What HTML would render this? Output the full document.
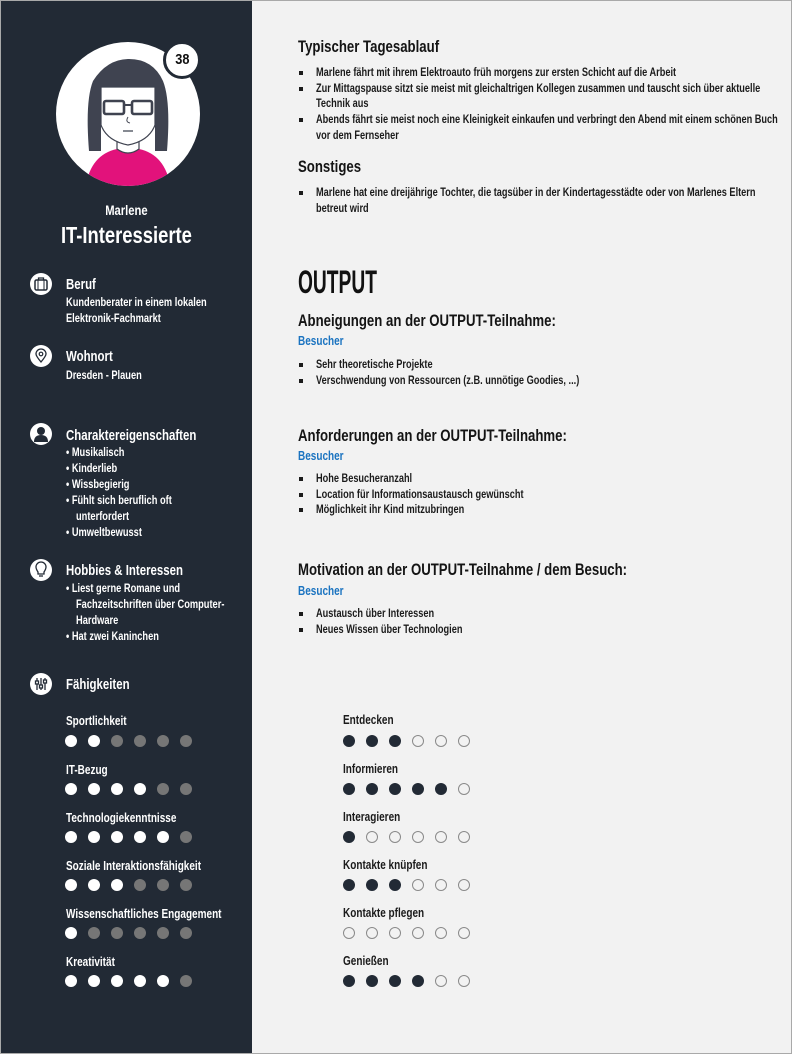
<!DOCTYPE html>
<html><head><meta charset="utf-8"><style>
*{margin:0;padding:0;box-sizing:border-box}
html,body{width:792px;height:1054px;overflow:hidden;background:#f2f2f2}
body{position:relative;font-family:"Liberation Sans Narrow","Liberation Sans",sans-serif;font-weight:bold;color:#1b1b1b}
#frame{position:absolute;left:0;top:0;width:792px;height:1054px;border:1px solid #a9a9a9}
#side{position:absolute;left:1px;top:1px;width:251px;height:1052px;background:#222a35;color:#fff}
.a{position:absolute;white-space:nowrap;transform:scaleX(.8);transform-origin:0 0}
.h{font-size:14.3px;line-height:16px}
.s{font-size:12.5px;line-height:16px}
.t{font-size:11.6px;line-height:16px}
.rh{font-size:16.5px;line-height:20px;color:#141414}
.b{font-size:11.5px;line-height:16px;color:#1b1b1b}
.blue{color:#1a73c0;font-size:12.5px;line-height:16px}
.sq{position:absolute;width:4px;height:4px;background:#1b1b1b}
.ic{position:absolute;width:22px;height:22px;border-radius:50%;background:#fff}
.d{position:absolute;width:12px;height:12px;border-radius:50%}
.w{background:#fff}.g{background:#767676}.k{background:#222a35}.o{border:1.3px solid #8a8a8a;background:transparent}
</style></head><body>
<div id="frame"></div>
<div id="side">
<svg style="position:absolute;left:54px;top:40px" width="146" height="146" viewBox="0 0 146 146">
<defs><clipPath id="c"><circle cx="73" cy="73" r="72"/></clipPath></defs>
<circle cx="73" cy="73" r="72" fill="#fff"/>
<g clip-path="url(#c)">
<path d="M30 150 Q34 114 62 108 L84 108 Q112 114 116 150Z" fill="#e2127b"/>
<path d="M62 96 L62 108 Q73 116 84 108 L84 96Z" fill="#fff" stroke="#3f4350" stroke-width="1.2"/>
<path d="M34 110 Q30 60 38 40 Q52 18 74 18 Q98 18 108 40 Q116 60 112 110 L100 110 L100 50 L46 50 L46 110Z" fill="#3f4350"/>
<path d="M46 46 L100 46 L100 84 Q94 100 73 104 Q52 100 46 84Z" fill="#fff" stroke="#3f4350" stroke-width="1.2"/>
<rect x="49" y="60" width="20" height="13" rx="2" fill="none" stroke="#3f4350" stroke-width="2.6"/>
<rect x="77" y="60" width="20" height="13" rx="2" fill="none" stroke="#3f4350" stroke-width="2.6"/>
<line x1="69" y1="64" x2="77" y2="64" stroke="#3f4350" stroke-width="2"/>
<path d="M73 76 Q70 81 75 82" fill="none" stroke="#3f4350" stroke-width="1"/>
<line x1="68" y1="90" x2="78" y2="90" stroke="#3f4350" stroke-width="1.2"/>
</g></svg>
<div style="position:absolute;left:162px;top:40px;width:38px;height:38px;border-radius:50%;background:#fff;border:3px solid #222a35;color:#111;font-size:15px;line-height:32px;text-align:center"><span style="display:inline-block;transform:scaleX(.85)">38</span></div>
<div class="a" style="left:0;width:251px;text-align:center;top:201px;font-size:14px;line-height:16px;transform-origin:125px 0">Marlene</div>
<div class="a" style="left:0;width:251px;text-align:center;top:221px;font-size:23px;line-height:26px;transform-origin:125px 0">IT-Interessierte</div>

<div class="ic" style="left:29px;top:272px"><svg width="22" height="22"><rect x="5" y="7" width="12" height="10" rx="1.5" fill="none" stroke="#222a35" stroke-width="1.5"/><path d="M8.5 7 V5 H13.5 V7" fill="none" stroke="#222a35" stroke-width="1.3"/><line x1="8" y1="7" x2="8" y2="17" stroke="#222a35"/><line x1="14" y1="7" x2="14" y2="17" stroke="#222a35"/></svg></div>
<div class="a h" style="left:65px;top:276px">Beruf</div>
<div class="a t" style="left:65px;top:294px">Kundenberater in einem lokalen</div>
<div class="a t" style="left:65px;top:310px">Elektronik-Fachmarkt</div>

<div class="ic" style="left:29px;top:344px"><svg width="22" height="22"><path d="M11 17 Q6 11 6 9 A5 5 0 0 1 16 9 Q16 11 11 17Z" fill="none" stroke="#222a35" stroke-width="1.3"/><circle cx="11" cy="9" r="1.8" fill="none" stroke="#222a35" stroke-width="1.2"/></svg></div>
<div class="a h" style="left:65px;top:348px">Wohnort</div>
<div class="a t" style="left:65px;top:367px">Dresden - Plauen</div>

<div class="ic" style="left:29px;top:422px"><svg width="22" height="22"><circle cx="11" cy="8" r="4" fill="#222a35"/><path d="M4 19 Q4 12 11 12 Q18 12 18 19Z" fill="#222a35"/></svg></div>
<div class="a h" style="left:65px;top:427px">Charaktereigenschaften</div>
<div class="a t" style="left:65px;top:444px">• Musikalisch</div>
<div class="a t" style="left:65px;top:460px">• Kinderlieb</div>
<div class="a t" style="left:65px;top:476px">• Wissbegierig</div>
<div class="a t" style="left:65px;top:492px">• Fühlt sich beruflich oft</div>
<div class="a t" style="left:75px;top:508px">unterfordert</div>
<div class="a t" style="left:65px;top:524px">• Umweltbewusst</div>

<div class="ic" style="left:29px;top:558px"><svg width="22" height="22"><path d="M8 13 Q6 10 6 8 A5 5 0 0 1 16 8 Q16 10 14 13 L14 15 L8 15Z" fill="none" stroke="#222a35" stroke-width="1.3"/><line x1="9" y1="17" x2="13" y2="17" stroke="#222a35" stroke-width="1.3"/></svg></div>
<div class="a h" style="left:65px;top:562px">Hobbies &amp; Interessen</div>
<div class="a t" style="left:65px;top:580px">• Liest gerne Romane und</div>
<div class="a t" style="left:75px;top:596px">Fachzeitschriften über Computer-</div>
<div class="a t" style="left:75px;top:612px">Hardware</div>
<div class="a t" style="left:65px;top:628px">• Hat zwei Kaninchen</div>

<div class="ic" style="left:29px;top:672px"><svg width="22" height="22"><g stroke="#222a35" stroke-width="1.3" fill="none"><line x1="7" y1="5" x2="7" y2="17"/><line x1="11" y1="5" x2="11" y2="17"/><line x1="15" y1="5" x2="15" y2="17"/><rect x="5.5" y="8" width="3" height="3" fill="#fff"/><rect x="9.5" y="12" width="3" height="3" fill="#fff"/><rect x="13.5" y="7" width="3" height="3" fill="#fff"/></g></svg></div>
<div class="a h" style="left:65px;top:676px">Fähigkeiten</div>

<div class="a s" style="left:65px;top:712px">Sportlichkeit</div>
<div class="a s" style="left:65px;top:761px">IT-Bezug</div>
<div class="a s" style="left:65px;top:809px">Technologiekenntnisse</div>
<div class="a s" style="left:65px;top:857px">Soziale Interaktionsfähigkeit</div>
<div class="a s" style="left:65px;top:905px">Wissenschaftliches Engagement</div>
<div class="a s" style="left:65px;top:953px">Kreativität</div>
</div>

<div class="d w" style="left:65px;top:735px"></div><div class="d w" style="left:88px;top:735px"></div><div class="d g" style="left:111px;top:735px"></div><div class="d g" style="left:134px;top:735px"></div><div class="d g" style="left:157px;top:735px"></div><div class="d g" style="left:180px;top:735px"></div>
<div class="d w" style="left:65px;top:783px"></div><div class="d w" style="left:88px;top:783px"></div><div class="d w" style="left:111px;top:783px"></div><div class="d w" style="left:134px;top:783px"></div><div class="d g" style="left:157px;top:783px"></div><div class="d g" style="left:180px;top:783px"></div>
<div class="d w" style="left:65px;top:831px"></div><div class="d w" style="left:88px;top:831px"></div><div class="d w" style="left:111px;top:831px"></div><div class="d w" style="left:134px;top:831px"></div><div class="d w" style="left:157px;top:831px"></div><div class="d g" style="left:180px;top:831px"></div>
<div class="d w" style="left:65px;top:879px"></div><div class="d w" style="left:88px;top:879px"></div><div class="d w" style="left:111px;top:879px"></div><div class="d g" style="left:134px;top:879px"></div><div class="d g" style="left:157px;top:879px"></div><div class="d g" style="left:180px;top:879px"></div>
<div class="d w" style="left:65px;top:927px"></div><div class="d g" style="left:88px;top:927px"></div><div class="d g" style="left:111px;top:927px"></div><div class="d g" style="left:134px;top:927px"></div><div class="d g" style="left:157px;top:927px"></div><div class="d g" style="left:180px;top:927px"></div>
<div class="d w" style="left:65px;top:975px"></div><div class="d w" style="left:88px;top:975px"></div><div class="d w" style="left:111px;top:975px"></div><div class="d w" style="left:134px;top:975px"></div><div class="d w" style="left:157px;top:975px"></div><div class="d g" style="left:180px;top:975px"></div>

<div class="a rh" style="left:298px;top:37px">Typischer Tagesablauf</div>
<div class="sq" style="left:299px;top:71px"></div><div class="a b" style="left:316px;top:65px">Marlene fährt mit ihrem Elektroauto früh morgens zur ersten Schicht auf die Arbeit</div>
<div class="sq" style="left:299px;top:87px"></div><div class="a b" style="left:316px;top:81px">Zur Mittagspause sitzt sie meist mit gleichaltrigen Kollegen zusammen und tauscht sich über aktuelle</div>
<div class="a b" style="left:316px;top:96px">Technik aus</div>
<div class="sq" style="left:299px;top:118px"></div><div class="a b" style="left:316px;top:112px">Abends fährt sie meist noch eine Kleinigkeit einkaufen und verbringt den Abend mit einem schönen Buch</div>
<div class="a b" style="left:316px;top:128px">vor dem Fernseher</div>

<div class="a rh" style="left:298px;top:157px">Sonstiges</div>
<div class="sq" style="left:299px;top:191px"></div><div class="a b" style="left:316px;top:185px">Marlene hat eine dreijährige Tochter, die tagsüber in der Kindertagesstädte oder von Marlenes Eltern</div>
<div class="a b" style="left:316px;top:201px">betreut wird</div>

<div class="a" style="left:298px;top:264px;font-size:32px;line-height:36px;color:#111;transform:scaleX(.6)">OUTPUT</div>

<div class="a rh" style="left:298px;top:311px">Abneigungen an der OUTPUT-Teilnahme:</div>
<div class="a blue" style="left:298px;top:333px">Besucher</div>
<div class="sq" style="left:299px;top:363px"></div><div class="a b" style="left:316px;top:357px">Sehr theoretische Projekte</div>
<div class="sq" style="left:299px;top:379px"></div><div class="a b" style="left:316px;top:373px">Verschwendung von Ressourcen (z.B. unnötige Goodies, ...)</div>

<div class="a rh" style="left:298px;top:426px">Anforderungen an der OUTPUT-Teilnahme:</div>
<div class="a blue" style="left:298px;top:448px">Besucher</div>
<div class="sq" style="left:299px;top:477px"></div><div class="a b" style="left:316px;top:471px">Hohe Besucheranzahl</div>
<div class="sq" style="left:299px;top:493px"></div><div class="a b" style="left:316px;top:487px">Location für Informationsaustausch gewünscht</div>
<div class="sq" style="left:299px;top:508px"></div><div class="a b" style="left:316px;top:502px">Möglichkeit ihr Kind mitzubringen</div>

<div class="a rh" style="left:298px;top:560px">Motivation an der OUTPUT-Teilnahme / dem Besuch:</div>
<div class="a blue" style="left:298px;top:583px">Besucher</div>
<div class="sq" style="left:299px;top:612px"></div><div class="a b" style="left:316px;top:606px">Austausch über Interessen</div>
<div class="sq" style="left:299px;top:628px"></div><div class="a b" style="left:316px;top:622px">Neues Wissen über Technologien</div>

<div class="a s" style="left:343px;top:712px">Entdecken</div>
<div class="a s" style="left:343px;top:761px">Informieren</div>
<div class="a s" style="left:343px;top:809px">Interagieren</div>
<div class="a s" style="left:343px;top:857px">Kontakte knüpfen</div>
<div class="a s" style="left:343px;top:905px">Kontakte pflegen</div>
<div class="a s" style="left:343px;top:953px">Genießen</div>

<div class="d k" style="left:343px;top:735px"></div><div class="d k" style="left:366px;top:735px"></div><div class="d k" style="left:389px;top:735px"></div><div class="d o" style="left:412px;top:735px"></div><div class="d o" style="left:435px;top:735px"></div><div class="d o" style="left:458px;top:735px"></div>
<div class="d k" style="left:343px;top:783px"></div><div class="d k" style="left:366px;top:783px"></div><div class="d k" style="left:389px;top:783px"></div><div class="d k" style="left:412px;top:783px"></div><div class="d k" style="left:435px;top:783px"></div><div class="d o" style="left:458px;top:783px"></div>
<div class="d k" style="left:343px;top:831px"></div><div class="d o" style="left:366px;top:831px"></div><div class="d o" style="left:389px;top:831px"></div><div class="d o" style="left:412px;top:831px"></div><div class="d o" style="left:435px;top:831px"></div><div class="d o" style="left:458px;top:831px"></div>
<div class="d k" style="left:343px;top:879px"></div><div class="d k" style="left:366px;top:879px"></div><div class="d k" style="left:389px;top:879px"></div><div class="d o" style="left:412px;top:879px"></div><div class="d o" style="left:435px;top:879px"></div><div class="d o" style="left:458px;top:879px"></div>
<div class="d o" style="left:343px;top:927px"></div><div class="d o" style="left:366px;top:927px"></div><div class="d o" style="left:389px;top:927px"></div><div class="d o" style="left:412px;top:927px"></div><div class="d o" style="left:435px;top:927px"></div><div class="d o" style="left:458px;top:927px"></div>
<div class="d k" style="left:343px;top:975px"></div><div class="d k" style="left:366px;top:975px"></div><div class="d k" style="left:389px;top:975px"></div><div class="d k" style="left:412px;top:975px"></div><div class="d o" style="left:435px;top:975px"></div><div class="d o" style="left:458px;top:975px"></div>
</body></html>
